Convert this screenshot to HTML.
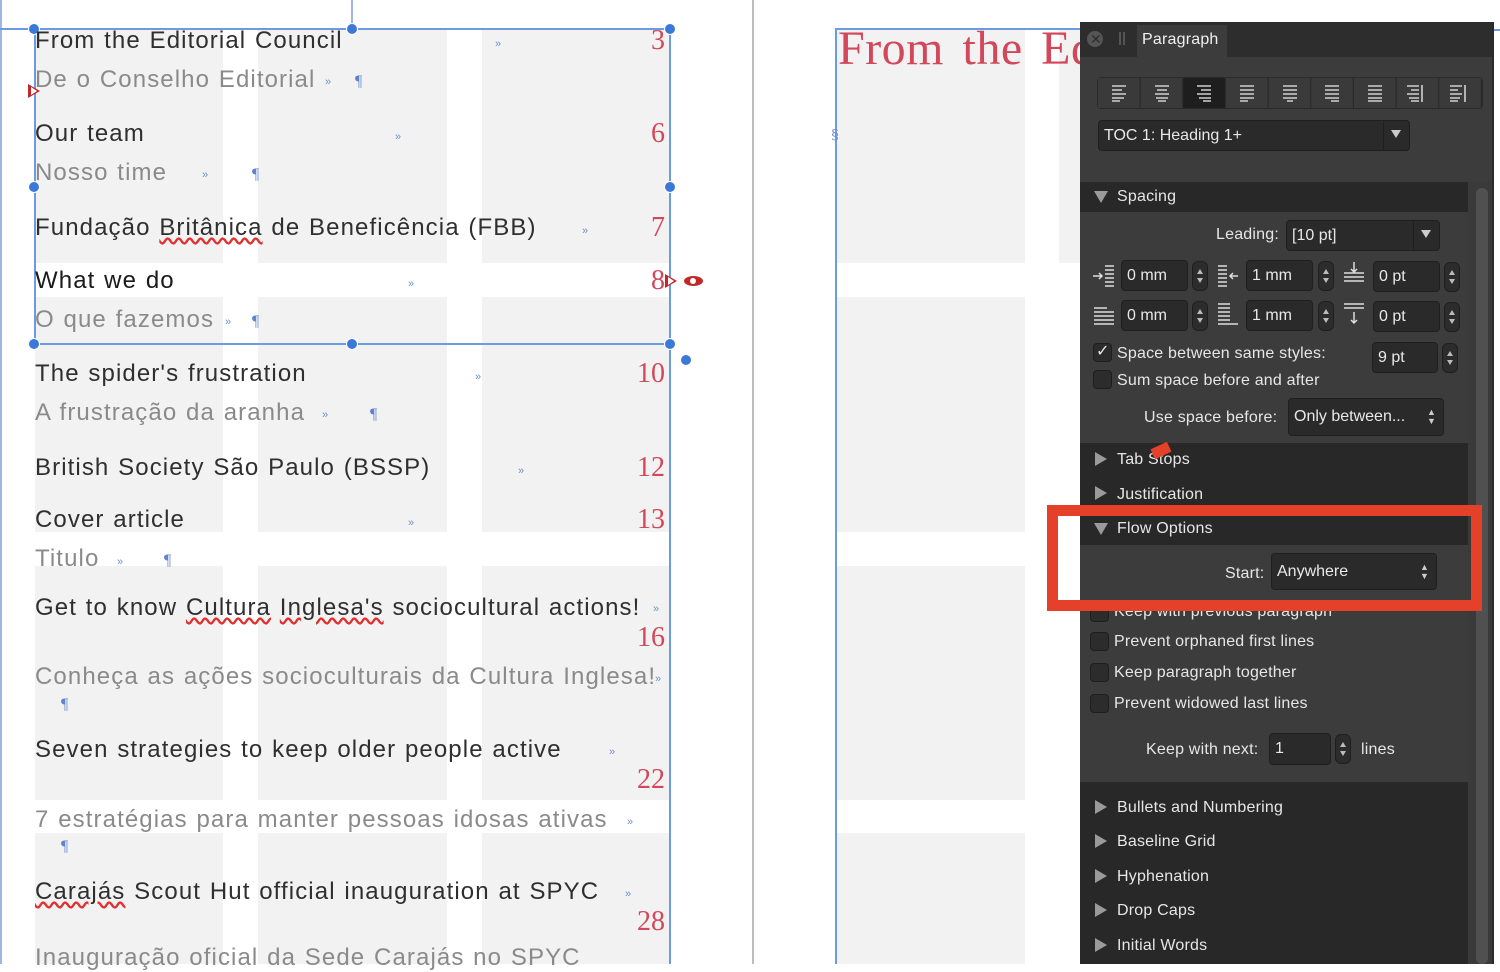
<!DOCTYPE html>
<html><head><meta charset="utf-8"><style>
*{margin:0;padding:0;box-sizing:border-box}
body{width:1500px;height:964px;overflow:hidden;background:#fff;position:relative;font-family:"Liberation Sans",sans-serif}
.a{position:absolute}
.g{position:absolute;background:#f2f2f2}
.t{position:absolute;font-size:24px;color:#2f2f2f;white-space:nowrap;line-height:28px;letter-spacing:1.1px;word-spacing:1px}
.p{color:#8a8a8a}
.n{position:absolute;font-family:"Liberation Serif",serif;font-size:28px;color:#d2475a;line-height:30px;text-align:right;width:60px}
.m{position:absolute;color:#6d8fd0;font-size:11px}
.pi{position:absolute;color:#5f84c9;font-size:16px;font-family:"Liberation Serif",serif}
.h{position:absolute;width:12px;height:12px;border-radius:50%;background:#3c78d8;border:1px solid #fff;margin:-6px 0 0 -6px}
.f{position:absolute;background:#2a2a2a;border:1px solid #1f1f1f;border-radius:4px;color:#e8e8e8;font-size:16px;padding-left:5px;display:flex;align-items:center}
.sp{position:absolute;width:16px;height:30px;background:#2c2c2c;border:1px solid #1f1f1f;border-radius:6px}
.sp:before{content:"";position:absolute;left:4px;top:7px;border-left:3.5px solid transparent;border-right:3.5px solid transparent;border-bottom:5px solid #bbb}
.sp:after{content:"";position:absolute;left:4px;bottom:7px;border-left:3.5px solid transparent;border-right:3.5px solid transparent;border-top:5px solid #bbb}
.lb{position:absolute;font-size:16px;color:#e6e6e6;white-space:nowrap;line-height:18px;letter-spacing:0.2px}
.cb{position:absolute;width:19px;height:19px;background:#2c2c2c;border:1px solid #1e1e1e;border-radius:4px}
.sh{position:absolute;left:1080px;width:388px;background:#282828}
.tri{position:absolute;width:0;height:0;border-top:7px solid transparent;border-bottom:7px solid transparent;border-left:12px solid #9a9a9a}
.trd{position:absolute;width:0;height:0;border-left:7px solid transparent;border-right:7px solid transparent;border-top:12px solid #9a9a9a}
</style></head><body>
<div class="g" style="left:35px;top:30px;width:188px;height:233px"></div>
<div class="g" style="left:258px;top:30px;width:189px;height:233px"></div>
<div class="g" style="left:482px;top:30px;width:188px;height:233px"></div>
<div class="g" style="left:35px;top:297px;width:188px;height:235px"></div>
<div class="g" style="left:258px;top:297px;width:189px;height:235px"></div>
<div class="g" style="left:482px;top:297px;width:188px;height:235px"></div>
<div class="g" style="left:35px;top:566px;width:188px;height:234px"></div>
<div class="g" style="left:258px;top:566px;width:189px;height:234px"></div>
<div class="g" style="left:482px;top:566px;width:188px;height:234px"></div>
<div class="g" style="left:35px;top:833px;width:188px;height:131px"></div>
<div class="g" style="left:258px;top:833px;width:189px;height:131px"></div>
<div class="g" style="left:482px;top:833px;width:188px;height:131px"></div>
<div class="a" style="left:35px;top:263px;width:635px;height:34px;background:#fff"></div>
<div class="g" style="left:836px;top:30px;width:189px;height:233px"></div>
<div class="g" style="left:1059px;top:30px;width:30px;height:233px"></div>
<div class="g" style="left:836px;top:297px;width:189px;height:235px"></div>
<div class="g" style="left:836px;top:566px;width:189px;height:234px"></div>
<div class="g" style="left:836px;top:833px;width:189px;height:131px"></div>
<div class="a" style="left:0;top:0;width:2px;height:964px;background:#9fb6e0"></div>
<div class="a" style="left:752px;top:0;width:2px;height:964px;background:#bdbdbd"></div>
<div class="a" style="left:0;top:28px;width:670px;height:2px;background:#6b9be0"></div>
<div class="a" style="left:351px;top:0;width:2px;height:30px;background:#9fb6e0"></div>
<div class="a" style="left:34px;top:28px;width:2px;height:316px;background:#6b9be0"></div>
<div class="a" style="left:669px;top:28px;width:2px;height:936px;background:#6b9be0"></div>
<div class="a" style="left:34px;top:343px;width:637px;height:2px;background:#6b9be0"></div>
<div class="a" style="left:835px;top:28px;width:2px;height:936px;background:#6b9be0"></div>
<div class="a" style="left:835px;top:28px;width:260px;height:2px;background:#6b9be0"></div>
<div class="h" style="left:34px;top:29px"></div><div class="h" style="left:352px;top:29px"></div><div class="h" style="left:670px;top:29px"></div>
<div class="h" style="left:34px;top:187px"></div><div class="h" style="left:670px;top:187px"></div>
<div class="h" style="left:34px;top:344px"></div><div class="h" style="left:352px;top:344px"></div><div class="h" style="left:670px;top:344px"></div>
<div class="h" style="left:686px;top:360px"></div>
<div class="a" style="left:28px;top:84px;width:0;height:0;border-top:7px solid transparent;border-bottom:7px solid transparent;border-left:12px solid #c0282a"></div>
<div class="a" style="left:31px;top:87px;width:0;height:0;border-top:4px solid transparent;border-bottom:4px solid transparent;border-left:6px solid #fff"></div>
<div class="a" style="left:665px;top:274px;width:0;height:0;border-top:7px solid transparent;border-bottom:7px solid transparent;border-left:12px solid #c0282a"></div>
<div class="a" style="left:668px;top:277px;width:0;height:0;border-top:4px solid transparent;border-bottom:4px solid transparent;border-left:6px solid #fff"></div>
<div class="a" style="left:684px;top:276px;width:19px;height:10px;border-radius:50%;background:#c0282a"></div>
<div class="a" style="left:690px;top:278px;width:6px;height:6px;border-radius:50%;background:#fff"></div>
<div class="t" style="left:35px;top:27px">From the Editorial Council</div><div class="m" style="left:495px;top:38px">»</div><div class="n" style="left:605px;top:26px">3</div>
<div class="t p" style="left:35px;top:66px">De o Conselho Editorial</div><div class="m" style="left:325px;top:76px">»</div><div class="pi" style="left:355px;top:73px">¶</div>
<div class="t" style="left:35px;top:120px">Our team</div><div class="m" style="left:395px;top:131px">»</div><div class="n" style="left:605px;top:119px">6</div>
<div class="t p" style="left:35px;top:159px">Nosso time</div><div class="m" style="left:202px;top:169px">»</div><div class="pi" style="left:252px;top:166px">¶</div>
<div class="t" style="left:35px;top:214px">Fundação <span style="text-decoration:underline wavy #e03030">Britânica</span> de Beneficência (FBB)</div><div class="m" style="left:582px;top:225px">»</div><div class="n" style="left:605px;top:213px">7</div>
<div class="t" style="left:35px;top:267px;color:#1a1a1a">What we do</div><div class="m" style="left:408px;top:278px">»</div><div class="n" style="left:605px;top:266px">8</div>
<div class="t p" style="left:35px;top:306px">O que fazemos</div><div class="m" style="left:225px;top:316px">»</div><div class="pi" style="left:252px;top:313px">¶</div>
<div class="t" style="left:35px;top:360px">The spider's frustration</div><div class="m" style="left:475px;top:371px">»</div><div class="n" style="left:605px;top:359px">10</div>
<div class="t p" style="left:35px;top:399px">A frustração da aranha</div><div class="m" style="left:322px;top:409px">»</div><div class="pi" style="left:370px;top:406px">¶</div>
<div class="t" style="left:35px;top:454px">British Society São Paulo (BSSP)</div><div class="m" style="left:518px;top:465px">»</div><div class="n" style="left:605px;top:453px">12</div>
<div class="t" style="left:35px;top:506px">Cover article</div><div class="m" style="left:408px;top:517px">»</div><div class="n" style="left:605px;top:505px">13</div>
<div class="t p" style="left:35px;top:545px">Titulo</div><div class="m" style="left:117px;top:556px">»</div><div class="pi" style="left:164px;top:552px">¶</div>
<div class="t" style="left:35px;top:594px">Get to know <span style="text-decoration:underline wavy #e03030">Cultura</span> <span style="text-decoration:underline wavy #e03030">Inglesa's</span> sociocultural actions!</div><div class="m" style="left:653px;top:603px">»</div>
<div class="n" style="left:605px;top:623px">16</div>
<div class="t p" style="left:35px;top:663px">Conheça as ações socioculturais da Cultura Inglesa!</div><div class="m" style="left:655px;top:673px">»</div>
<div class="pi" style="left:61px;top:696px">¶</div>
<div class="t" style="left:35px;top:736px">Seven strategies to keep older people active</div><div class="m" style="left:609px;top:746px">»</div>
<div class="n" style="left:605px;top:765px">22</div>
<div class="t p" style="left:35px;top:806px">7 estratégias para manter pessoas idosas ativas</div><div class="m" style="left:627px;top:816px">»</div>
<div class="pi" style="left:61px;top:838px">¶</div>
<div class="t" style="left:35px;top:878px"><span style="text-decoration:underline wavy #e03030">Carajás</span> Scout Hut official inauguration at SPYC</div><div class="m" style="left:625px;top:888px">»</div>
<div class="n" style="left:605px;top:907px">28</div>
<div class="t p" style="left:35px;top:944px">Inauguração oficial da Sede Carajás no SPYC</div>
<div class="a" style="left:838px;top:21px;font-family:'Liberation Serif',serif;font-size:48px;color:#d2475a;white-space:nowrap;letter-spacing:0.5px;word-spacing:6px">From the Ed</div>
<div class="m" style="left:831px;top:126px;font-size:14px">§</div>
<div class="a" style="left:1492px;top:29px;width:8px;height:2px;background:#6b9be0"></div>

<div class="a" style="left:1080px;top:22px;width:412px;height:942px;background:#3c3c3c"></div>
<div class="a" style="left:1080px;top:22px;width:412px;height:35px;background:#2d2d2d"></div>
<div class="a" style="left:1137px;top:25px;width:90px;height:32px;background:#3c3c3c"></div>
<div class="a" style="left:1087px;top:31px;width:16px;height:16px;border-radius:50%;background:#555"></div>
<div class="lb" style="left:1090px;top:30px;color:#2d2d2d;font-size:14px">✕</div>
<div class="a" style="left:1119px;top:32px;width:2px;height:13px;background:#555"></div><div class="a" style="left:1123px;top:32px;width:2px;height:13px;background:#555"></div>
<div class="lb" style="left:1142px;top:31px;color:#f0f0f0">Paragraph</div>
<div class="a" style="left:1097px;top:77px;width:386px;height:32px;background:#2a2a2a;border-radius:4px"></div>
<svg class="a" style="left:1098px;top:78px" width="384" height="30">
<g fill="#3a3a3a"><rect x="0" y="0" width="41.5" height="30"/><rect x="42.7" y="0" width="41.5" height="30"/><rect x="128" y="0" width="41.5" height="30"/><rect x="170.7" y="0" width="41.5" height="30"/><rect x="213.3" y="0" width="41.5" height="30"/><rect x="256" y="0" width="41.5" height="30"/><rect x="298.7" y="0" width="41.5" height="30"/><rect x="341.3" y="0" width="41.5" height="30"/></g>
<rect x="85.3" y="0" width="41.5" height="30" fill="#1e1e1e"/>
<g stroke="#cfcfcf" stroke-width="1.6">
<path d="M14 8h14M14 12h10M14 16h14M14 20h12M14 23h8"/>
<path d="M57 8h14M59 12h10M57 16h14M58 20h12M60 23h8"/>
<path d="M99 8h14M103 12h10M99 16h14M101 20h12M105 23h8"/>
<path d="M142 8h14M142 12h14M142 16h14M142 20h14M142 23h8"/>
<path d="M185 8h14M185 12h14M185 16h14M185 20h14M189 23h6"/>
<path d="M227 8h14M227 12h14M227 16h14M227 20h14M233 23h8"/>
<path d="M270 8h14M270 12h14M270 16h14M270 20h14M270 23h14"/>
<path d="M309 8h12M313 12h8M309 16h12M311 20h10M313 23h8M324 7v17"/>
<path d="M352 8h12M352 12h8M352 16h12M352 20h10M352 23h8M367 7v17"/>
</g></svg>
<div class="f" style="left:1098px;top:120px;width:312px;height:31px;font-size:16px">TOC 1: Heading 1+</div>
<div class="a" style="left:1383px;top:121px;width:1px;height:29px;background:#1f1f1f"></div>
<div class="trd" style="left:1391px;top:130px;border-left-width:5px;border-right-width:5px;border-top:8px solid #ccc"></div>
<div class="sh" style="top:182px;height:30px"></div>
<div class="trd" style="left:1094px;top:191px"></div>
<div class="lb" style="left:1117px;top:188px">Spacing</div>
<div class="lb" style="left:1216px;top:226px">Leading:</div>
<div class="f" style="left:1286px;top:220px;width:154px;height:31px">[10 pt]</div>
<div class="a" style="left:1413px;top:221px;width:1px;height:29px;background:#1f1f1f"></div>
<div class="trd" style="left:1421px;top:230px;border-left-width:5px;border-right-width:5px;border-top:8px solid #ccc"></div>
<svg class="a" style="left:1092px;top:262px" width="380" height="70" stroke="#ddd" stroke-width="1.5" fill="none">
<path d="M1 14h8M7 11l3 3-3 3M13 4h9M13 8h9M13 12h9M13 16h9M13 20h9M13 24h9"/>
<path d="M126 4h9M126 8h9M126 12h9M126 16h9M126 20h9M126 24h9M138 14h8M141 11l-3 3 3 3"/>
<path d="M252 11h20M252 15h20M252 19h20M262 0v10M259 7l3 3 3-3"/>
<path d="M2 46h13M2 50h20M2 54h20M2 58h20M2 62h20"/>
<path d="M126 42h12M126 46h12M126 50h12M126 54h12M126 58h12M126 62h20"/>
<path d="M252 42h20M252 46h20M262 50v11M259 58l3 3 3-3"/>
</svg>
<div class="f" style="left:1121px;top:260px;width:67px;height:31px">0 mm</div><div class="sp" style="left:1192px;top:261px"></div>
<div class="f" style="left:1246px;top:260px;width:67px;height:31px">1 mm</div><div class="sp" style="left:1318px;top:261px"></div>
<div class="f" style="left:1373px;top:261px;width:67px;height:31px">0 pt</div><div class="sp" style="left:1444px;top:262px"></div>
<div class="f" style="left:1121px;top:300px;width:67px;height:31px">0 mm</div><div class="sp" style="left:1192px;top:301px"></div>
<div class="f" style="left:1246px;top:300px;width:67px;height:31px">1 mm</div><div class="sp" style="left:1318px;top:301px"></div>
<div class="f" style="left:1373px;top:301px;width:67px;height:31px">0 pt</div><div class="sp" style="left:1444px;top:302px"></div>
<div class="cb" style="left:1093px;top:343px"></div>
<div class="lb" style="left:1096px;top:343px;font-size:16px">✓</div>
<div class="lb" style="left:1117px;top:345px">Space between same styles:</div>
<div class="f" style="left:1372px;top:342px;width:66px;height:31px">9 pt</div><div class="sp" style="left:1442px;top:343px"></div>
<div class="cb" style="left:1093px;top:370px"></div>
<div class="lb" style="left:1117px;top:372px">Sum space before and after</div>
<div class="lb" style="left:1144px;top:409px">Use space before:</div>
<div class="f" style="left:1288px;top:398px;width:156px;height:38px">Only between...</div>
<div class="a" style="left:1427px;top:408px;color:#ccc;font-size:9px;line-height:9px">▲<br>▼</div>
<div class="sh" style="top:443px;height:73px"></div>
<div class="tri" style="left:1095px;top:452px"></div><div class="lb" style="left:1117px;top:451px">Tab Stops</div>
<div class="tri" style="left:1095px;top:486px"></div><div class="lb" style="left:1117px;top:486px">Justification</div>
<div class="a" style="left:1152px;top:445px;width:18px;height:11px;background:#e5402a;transform:rotate(-25deg)"></div>
<div class="sh" style="top:516px;height:29px"></div>
<div class="trd" style="left:1094px;top:523px"></div><div class="lb" style="left:1117px;top:520px">Flow Options</div>
<div class="lb" style="left:1225px;top:565px">Start:</div>
<div class="f" style="left:1271px;top:553px;width:166px;height:37px">Anywhere</div>
<div class="a" style="left:1420px;top:563px;color:#ccc;font-size:9px;line-height:9px">▲<br>▼</div>
<div class="cb" style="left:1090px;top:603px"></div><div class="lb" style="left:1114px;top:603px">Keep with previous paragraph</div>
<div class="cb" style="left:1090px;top:632px"></div><div class="lb" style="left:1114px;top:633px">Prevent orphaned first lines</div>
<div class="cb" style="left:1090px;top:663px"></div><div class="lb" style="left:1114px;top:664px">Keep paragraph together</div>
<div class="cb" style="left:1090px;top:694px"></div><div class="lb" style="left:1114px;top:695px">Prevent widowed last lines</div>
<div class="lb" style="left:1146px;top:741px">Keep with next:</div>
<div class="f" style="left:1269px;top:733px;width:62px;height:32px">1</div><div class="sp" style="left:1335px;top:734px"></div>
<div class="lb" style="left:1361px;top:741px">lines</div>
<div class="sh" style="top:782px;height:182px"></div>
<div class="tri" style="left:1095px;top:800px"></div><div class="lb" style="left:1117px;top:799px">Bullets and Numbering</div>
<div class="tri" style="left:1095px;top:834px"></div><div class="lb" style="left:1117px;top:833px">Baseline Grid</div>
<div class="tri" style="left:1095px;top:869px"></div><div class="lb" style="left:1117px;top:868px">Hyphenation</div>
<div class="tri" style="left:1095px;top:903px"></div><div class="lb" style="left:1117px;top:902px">Drop Caps</div>
<div class="tri" style="left:1095px;top:938px"></div><div class="lb" style="left:1117px;top:937px">Initial Words</div>
<div class="a" style="left:1468px;top:182px;width:24px;height:782px;background:#3a3a3a"></div>
<div class="a" style="left:1476px;top:188px;width:12px;height:776px;border-radius:6px;background:#505050"></div>
<div class="a" style="left:1492px;top:22px;width:2px;height:942px;background:#2a2a2a"></div>
<div class="a" style="left:1047px;top:505px;width:435px;height:106px;border:11px solid #e5402a"></div>
</body></html>
